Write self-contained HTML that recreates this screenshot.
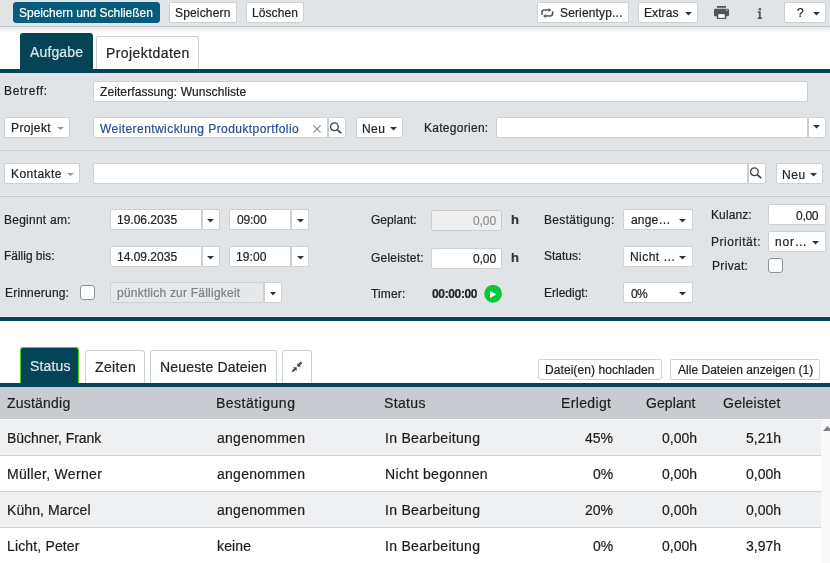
<!DOCTYPE html>
<html><head><meta charset="utf-8">
<style>
*{box-sizing:border-box;margin:0;padding:0}
html,body{width:830px;height:563px;overflow:hidden;background:#fff}
body{position:relative;font-family:"Liberation Sans",sans-serif;font-size:12px;color:#333}
.a{position:absolute}
.t{position:absolute;white-space:pre;will-change:transform;-webkit-text-stroke:0.2px currentColor}
.bx{position:absolute;background:#fff;border:1px solid #cdd1d4}
</style></head><body>
<div class="a" style="left:0px;top:0px;width:830px;height:26px;background:#e1e4e6;"></div>
<div class="a" style="left:0px;top:26px;width:830px;height:1px;background:#c5cacd;"></div>
<div class="a" style="left:0px;top:27px;width:830px;height:6px;background:#fff;background:linear-gradient(#e7e9ea,#fff)"></div>
<div class="bx" style="left:13px;top:2px;width:147px;height:21px;background:#075b7c;border-color:#075b7c;border-radius:3px"></div>
<div class="bx" style="left:169px;top:2px;width:68px;height:21px;background:#fff;border-color:#cdd1d4;border-radius:2px"></div>
<div class="bx" style="left:246px;top:2px;width:58px;height:21px;background:#fff;border-color:#cdd1d4;border-radius:2px"></div>
<div class="bx" style="left:537px;top:2px;width:92px;height:21px;background:#fff;border-color:#cdd1d4;border-radius:2px"></div>
<div class="bx" style="left:638px;top:2px;width:60px;height:21px;background:#fff;border-color:#cdd1d4;border-radius:2px"></div>
<div class="bx" style="left:784px;top:2px;width:42px;height:21px;background:#fff;border-color:#cdd1d4;border-radius:2px"></div>
<svg class="a" style="left:685px;top:12px" width="7" height="3.5" viewBox="0 0 7 3.5"><path d="M0 0H7L3.5 3.5Z" fill="#333"/></svg>
<svg class="a" style="left:813px;top:12px" width="7" height="3.5" viewBox="0 0 7 3.5"><path d="M0 0H7L3.5 3.5Z" fill="#333"/></svg>
<svg class="a" style="left:541px;top:8px" width="13" height="11" viewBox="0 0 13 11"><path d="M1 6.8V4.5Q1 2 3.5 2H8.2" fill="none" stroke="#555" stroke-width="1.6"/><path d="M7.6 0L10.4 2L7.6 4Z" fill="#555"/><path d="M11.6 3.2V5.6Q11.6 8 9 8H4.4" fill="none" stroke="#555" stroke-width="1.6"/><path d="M4.8 5.9L2 8L4.8 10.1Z" fill="#555"/></svg>
<svg class="a" style="left:714px;top:6px" width="15" height="13" viewBox="0 0 15 13"><rect x="3" y="0" width="9" height="1.8" fill="#555"/><rect x="0" y="2.7" width="15" height="7.6" rx="1.2" fill="#555"/><rect x="2.8" y="7" width="9.4" height="6" fill="#555"/><rect x="4.3" y="8.2" width="6.4" height="3.6" fill="#fff"/><rect x="12.3" y="3.6" width="1.2" height="1.2" fill="#ddd"/></svg>
<svg class="a" style="left:757px;top:8px" width="6" height="11" viewBox="0 0 6 11"><circle cx="2.9" cy="1.2" r="1.25" fill="#555"/><path d="M0.7 3.3H3.7V9.4H5V11H0.6V9.4H1.9V4.7H0.7Z" fill="#555"/></svg>
<div class="a" style="left:20px;top:33px;width:73px;height:36px;background:#054357;border-radius:3px 3px 0 0"></div>
<div class="bx" style="left:96px;top:36px;width:103px;height:33px;border-bottom:none;border-radius:3px 3px 0 0;border-color:#cad1d5"></div>
<div class="a" style="left:0px;top:69px;width:830px;height:4px;background:#054357;"></div>
<div class="a" style="left:0px;top:73px;width:830px;height:243px;background:#e1e4e6;"></div>
<div class="a" style="left:0px;top:316px;width:830px;height:1px;background:#eef0f1;"></div>
<div class="a" style="left:0px;top:317px;width:830px;height:4px;background:#054357;"></div>
<div class="bx" style="left:93px;top:81px;width:715px;height:21px;background:#fff;border-color:#cdd1d4;border-radius:2px"></div>
<div class="bx" style="left:4px;top:117px;width:66px;height:21px;background:#fff;border-color:#cdd1d4;border-radius:2px"></div>
<svg class="a" style="left:57px;top:127px" width="7" height="3" viewBox="0 0 7 3"><path d="M0 0H7L3.5 3Z" fill="#9a9a9a"/></svg>
<div class="bx" style="left:93px;top:117px;width:235px;height:21px;background:#fff;border-color:#cdd1d4;border-radius:2px 0 0 2px"></div>
<svg class="a" style="left:313px;top:125px" width="8" height="8" viewBox="0 0 8 8"><path d="M0.4 0.4L7.6 7.6M7.6 0.4L0.4 7.6" stroke="#8a8a8a" stroke-width="1.15"/></svg>
<div class="bx" style="left:328px;top:117px;width:18px;height:21px;background:#fff;border-color:#cdd1d4;border-radius:0 2px 2px 0"></div>
<svg class="a" style="left:329px;top:122px" width="14" height="13" viewBox="0 0 14 13"><circle cx="5.4" cy="4.8" r="3.85" fill="none" stroke="#3d4244" stroke-width="1.3"/><path d="M8.1 7.6L12.2 11.2" stroke="#3d4244" stroke-width="1.7"/></svg>
<div class="bx" style="left:356px;top:117px;width:47px;height:21px;background:#fff;border-color:#cdd1d4;border-radius:2px"></div>
<svg class="a" style="left:390px;top:127px" width="7" height="3.5" viewBox="0 0 7 3.5"><path d="M0 0H7L3.5 3.5Z" fill="#333"/></svg>
<div class="bx" style="left:496px;top:117px;width:312px;height:21px;background:#fff;border-color:#cdd1d4;border-radius:2px 0 0 2px"></div>
<div class="bx" style="left:808px;top:117px;width:18px;height:21px;background:#fff;border-color:#cdd1d4;border-radius:0 2px 2px 0"></div>
<svg class="a" style="left:813px;top:125px" width="7" height="3.5" viewBox="0 0 7 3.5"><path d="M0 0H7L3.5 3.5Z" fill="#333"/></svg>
<div class="a" style="left:0px;top:149px;width:830px;height:1px;background:#e5e8e9;"></div>
<div class="a" style="left:0px;top:150px;width:830px;height:1px;background:#c8cdd0;"></div>
<div class="bx" style="left:4px;top:163px;width:76px;height:21px;background:#fff;border-color:#cdd1d4;border-radius:2px"></div>
<svg class="a" style="left:67px;top:173px" width="7" height="3" viewBox="0 0 7 3"><path d="M0 0H7L3.5 3Z" fill="#9a9a9a"/></svg>
<div class="bx" style="left:93px;top:163px;width:655px;height:21px;background:#fff;border-color:#cdd1d4;border-radius:2px 0 0 2px"></div>
<div class="bx" style="left:748px;top:163px;width:18px;height:21px;background:#fff;border-color:#cdd1d4;border-radius:0 2px 2px 0"></div>
<svg class="a" style="left:749px;top:167px" width="14" height="13" viewBox="0 0 14 13"><circle cx="5.4" cy="4.8" r="3.85" fill="none" stroke="#3d4244" stroke-width="1.3"/><path d="M8.1 7.6L12.2 11.2" stroke="#3d4244" stroke-width="1.7"/></svg>
<div class="bx" style="left:776px;top:163px;width:47px;height:21px;background:#fff;border-color:#cdd1d4;border-radius:2px"></div>
<svg class="a" style="left:810px;top:173px" width="7" height="3.5" viewBox="0 0 7 3.5"><path d="M0 0H7L3.5 3.5Z" fill="#333"/></svg>
<div class="a" style="left:0px;top:195px;width:830px;height:1px;background:#e5e8e9;"></div>
<div class="a" style="left:0px;top:196px;width:830px;height:1px;background:#c8cdd0;"></div>
<div class="bx" style="left:110px;top:209px;width:92px;height:21px;background:#fff;border-color:#cdd1d4;border-radius:2px 0 0 2px"></div>
<div class="bx" style="left:202px;top:209px;width:18px;height:21px;background:#fff;border-color:#cdd1d4;border-radius:0 2px 2px 0"></div>
<svg class="a" style="left:207px;top:219px" width="7" height="3.5" viewBox="0 0 7 3.5"><path d="M0 0H7L3.5 3.5Z" fill="#333"/></svg>
<div class="bx" style="left:229px;top:209px;width:62px;height:21px;background:#fff;border-color:#cdd1d4;border-radius:2px 0 0 2px"></div>
<div class="bx" style="left:291px;top:209px;width:18px;height:21px;background:#fff;border-color:#cdd1d4;border-radius:0 2px 2px 0"></div>
<svg class="a" style="left:297px;top:219px" width="7" height="3.5" viewBox="0 0 7 3.5"><path d="M0 0H7L3.5 3.5Z" fill="#333"/></svg>
<div class="bx" style="left:110px;top:246px;width:92px;height:21px;background:#fff;border-color:#cdd1d4;border-radius:2px 0 0 2px"></div>
<div class="bx" style="left:202px;top:246px;width:18px;height:21px;background:#fff;border-color:#cdd1d4;border-radius:0 2px 2px 0"></div>
<svg class="a" style="left:207px;top:256px" width="7" height="3.5" viewBox="0 0 7 3.5"><path d="M0 0H7L3.5 3.5Z" fill="#333"/></svg>
<div class="bx" style="left:229px;top:246px;width:62px;height:21px;background:#fff;border-color:#cdd1d4;border-radius:2px 0 0 2px"></div>
<div class="bx" style="left:291px;top:246px;width:18px;height:21px;background:#fff;border-color:#cdd1d4;border-radius:0 2px 2px 0"></div>
<svg class="a" style="left:297px;top:256px" width="7" height="3.5" viewBox="0 0 7 3.5"><path d="M0 0H7L3.5 3.5Z" fill="#333"/></svg>
<div class="bx" style="left:80px;top:285px;width:15px;height:15px;background:#fff;border-color:#8a9599;border-radius:3px"></div>
<div class="bx" style="left:110px;top:282px;width:154px;height:21px;background:#e6e8e9;border-color:#cdd1d4;border-radius:2px"></div>
<div class="bx" style="left:264px;top:282px;width:18px;height:21px;background:#fff;border-color:#cdd1d4;border-radius:0 2px 2px 0"></div>
<svg class="a" style="left:270px;top:292px" width="6" height="3.5" viewBox="0 0 6 3.5"><path d="M0 0H6L3.0 3.5Z" fill="#333"/></svg>
<div class="bx" style="left:431px;top:210px;width:71px;height:21px;background:#efefef;border-color:#cacdcf;border-radius:2px"></div>
<div class="bx" style="left:431px;top:248px;width:71px;height:21px;background:#fff;border-color:#cdd1d4;border-radius:2px"></div>
<svg class="a" style="left:484px;top:285px" width="19" height="18" viewBox="0 0 19 18"><circle cx="9.1" cy="8.8" r="8.9" fill="#06c934"/><path d="M6 5.9L12.3 9.4L6 13Z" fill="#fff"/></svg>
<div class="bx" style="left:623px;top:209px;width:70px;height:21px;background:#fff;border-color:#cdd1d4;border-radius:2px"></div>
<svg class="a" style="left:679px;top:219px" width="7" height="3.5" viewBox="0 0 7 3.5"><path d="M0 0H7L3.5 3.5Z" fill="#333"/></svg>
<div class="bx" style="left:623px;top:246px;width:70px;height:21px;background:#fff;border-color:#cdd1d4;border-radius:2px"></div>
<svg class="a" style="left:679px;top:256px" width="7" height="3.5" viewBox="0 0 7 3.5"><path d="M0 0H7L3.5 3.5Z" fill="#333"/></svg>
<div class="bx" style="left:623px;top:282px;width:70px;height:21px;background:#fff;border-color:#cdd1d4;border-radius:2px"></div>
<svg class="a" style="left:679px;top:292px" width="7" height="3.5" viewBox="0 0 7 3.5"><path d="M0 0H7L3.5 3.5Z" fill="#333"/></svg>
<div class="bx" style="left:768px;top:204px;width:58px;height:21px;background:#fff;border-color:#cdd1d4;border-radius:2px"></div>
<div class="bx" style="left:768px;top:231px;width:58px;height:21px;background:#fff;border-color:#cdd1d4;border-radius:2px"></div>
<svg class="a" style="left:812px;top:241px" width="7" height="3.5" viewBox="0 0 7 3.5"><path d="M0 0H7L3.5 3.5Z" fill="#333"/></svg>
<div class="bx" style="left:768px;top:258px;width:15px;height:15px;background:#fff;border-color:#8a9599;border-radius:3px"></div>
<div class="a" style="left:20px;top:347px;width:59px;height:36px;background:#054357;border:1px solid #45d31c;border-bottom:none;border-radius:3px 3px 0 0"></div>
<div class="bx" style="left:85px;top:350px;width:60px;height:33px;border-bottom:none;border-radius:3px 3px 0 0;border-color:#cad1d5"></div>
<div class="bx" style="left:150px;top:350px;width:127px;height:33px;border-bottom:none;border-radius:3px 3px 0 0;border-color:#cad1d5"></div>
<div class="bx" style="left:282px;top:350px;width:30px;height:33px;border-bottom:none;border-radius:3px 3px 0 0;border-color:#cad1d5"></div>
<svg class="a" style="left:288px;top:358px" width="18" height="18" viewBox="0 0 18 18"><path d="M9.3 5L9.3 8.7L13 8.7Z" fill="#444"/><path d="M10.6 7.3L13.6 4.3" stroke="#444" stroke-width="2"/><path d="M4.9 9.3L8.7 9.3L8.7 13Z" fill="#444"/><path d="M7.4 10.6L4.3 13.6" stroke="#444" stroke-width="2"/></svg>
<div class="bx" style="left:538px;top:359px;width:124px;height:21px;background:#fff;border-color:#cdd1d4;border-radius:2px"></div>
<div class="bx" style="left:670px;top:359px;width:150px;height:21px;background:#fff;border-color:#cdd1d4;border-radius:2px"></div>
<div class="a" style="left:0px;top:383px;width:830px;height:4px;background:#054357;"></div>
<div class="a" style="left:0px;top:387px;width:830px;height:32px;background:#c8ccd0;"></div>
<div class="a" style="left:0px;top:419px;width:821px;height:1px;background:#fbfbfc;"></div>
<div class="a" style="left:0px;top:420px;width:821px;height:35px;background:#eff0f2;"></div>
<div class="a" style="left:0px;top:455px;width:821px;height:1px;background:#cfd3d6;"></div>
<div class="a" style="left:0px;top:491px;width:821px;height:1px;background:#cfd3d6;"></div>
<div class="a" style="left:0px;top:492px;width:821px;height:35px;background:#eff0f2;"></div>
<div class="a" style="left:0px;top:527px;width:821px;height:1px;background:#cfd3d6;"></div>
<div class="a" style="left:821px;top:419px;width:9px;height:144px;background:#fafafa;"></div>
<svg class="a" style="left:822px;top:425px" width="8" height="7" viewBox="0 0 8 7"><path d="M0.9 5.9H10L5.4 1Z" fill="#7d7d7d"/></svg>
<div class="t" style="left:19.0px;top:6px;font-size:12px;line-height:14px;color:#fff;letter-spacing:-0.01px">Speichern und Schließen</div>
<div class="t" style="left:175.0px;top:6px;font-size:12px;line-height:14px;color:#222222;letter-spacing:0.16px">Speichern</div>
<div class="t" style="left:251.5px;top:6px;font-size:12px;line-height:14px;color:#222222;letter-spacing:0.08px">Löschen</div>
<div class="t" style="left:559.5px;top:6px;font-size:12px;line-height:14px;color:#222222;letter-spacing:0.15px">Serientyp...</div>
<div class="t" style="left:644.0px;top:6px;font-size:12px;line-height:14px;color:#222222;letter-spacing:0.08px">Extras</div>
<div class="t" style="left:796.5px;top:6px;font-size:12px;line-height:14px;color:#222222">?</div>
<div class="t" style="left:30.0px;top:44px;font-size:14px;line-height:16px;color:#dfe8eb;letter-spacing:0.13px">Aufgabe</div>
<div class="t" style="left:105.5px;top:45px;font-size:14px;line-height:16px;color:#222222;letter-spacing:0.43px">Projektdaten</div>
<div class="t" style="left:4.0px;top:84px;font-size:12px;line-height:14px;color:#222222;letter-spacing:0.66px">Betreff:</div>
<div class="t" style="left:99.5px;top:85px;font-size:12px;line-height:14px;color:#222222;letter-spacing:0.09px">Zeiterfassung: Wunschliste</div>
<div class="t" style="left:10.5px;top:121px;font-size:12px;line-height:14px;color:#222222;letter-spacing:0.38px">Projekt</div>
<div class="t" style="left:100.0px;top:122px;font-size:12px;line-height:14px;color:#2d4b93;letter-spacing:0.43px">Weiterentwicklung Produktportfolio</div>
<div class="t" style="left:361.5px;top:122px;font-size:12px;line-height:14px;color:#222222;letter-spacing:0.45px">Neu</div>
<div class="t" style="left:423.5px;top:121px;font-size:12px;line-height:14px;color:#222222;letter-spacing:0.28px">Kategorien:</div>
<div class="t" style="left:10.5px;top:167px;font-size:12px;line-height:14px;color:#222222;letter-spacing:0.44px">Kontakte</div>
<div class="t" style="left:781.5px;top:168px;font-size:12px;line-height:14px;color:#222222;letter-spacing:0.55px">Neu</div>
<div class="t" style="left:3.5px;top:213px;font-size:12px;line-height:14px;color:#222222;letter-spacing:0.25px">Beginnt am:</div>
<div class="t" style="left:116.5px;top:213px;font-size:12px;line-height:14px;color:#222222">19.06.2035</div>
<div class="t" style="left:236.5px;top:213px;font-size:12px;line-height:14px;color:#222222;letter-spacing:-0.12px">09:00</div>
<div class="t" style="left:3.5px;top:249px;font-size:12px;line-height:14px;color:#222222;letter-spacing:-0.02px">Fällig bis:</div>
<div class="t" style="left:116.5px;top:250px;font-size:12px;line-height:14px;color:#222222">14.09.2035</div>
<div class="t" style="left:235.5px;top:250px;font-size:12px;line-height:14px;color:#222222;letter-spacing:0.12px">19:00</div>
<div class="t" style="left:4.5px;top:286px;font-size:12px;line-height:14px;color:#222222;letter-spacing:0.19px">Erinnerung:</div>
<div class="t" style="left:116.5px;top:286px;font-size:12px;line-height:14px;color:#7b8084;letter-spacing:0.22px">pünktlich zur Fälligkeit</div>
<div class="t" style="left:370.5px;top:213px;font-size:12px;line-height:14px;color:#222222;letter-spacing:0.04px">Geplant:</div>
<div class="t" style="left:472.5px;top:214px;font-size:12px;line-height:14px;color:#8d8f91;letter-spacing:-0.1px">0,00</div>
<div class="t" style="left:511px;top:212.5px;font-size:13px;line-height:14px;color:#333;font-weight:700">h</div>
<div class="t" style="left:370.5px;top:251px;font-size:12px;line-height:14px;color:#222222;letter-spacing:0.21px">Geleistet:</div>
<div class="t" style="left:472.5px;top:252px;font-size:12px;line-height:14px;color:#222222;letter-spacing:-0.1px">0,00</div>
<div class="t" style="left:511px;top:250.5px;font-size:13px;line-height:14px;color:#333;font-weight:700">h</div>
<div class="t" style="left:370.5px;top:287px;font-size:12px;line-height:14px;color:#222222;letter-spacing:0.16px">Timer:</div>
<div class="t" style="left:431.5px;top:287px;font-size:12px;line-height:14px;color:#222222;font-weight:700;letter-spacing:-0.36px">00:00:00</div>
<div class="t" style="left:544.0px;top:213px;font-size:12px;line-height:14px;color:#222222;letter-spacing:0.32px">Bestätigung:</div>
<div class="t" style="left:630.5px;top:213px;font-size:12px;line-height:14px;color:#222222;letter-spacing:0.18px">ange…</div>
<div class="t" style="left:544.0px;top:249px;font-size:12px;line-height:14px;color:#222222">Status:</div>
<div class="t" style="left:629.5px;top:250px;font-size:12px;line-height:14px;color:#222222;letter-spacing:0.45px">Nicht …</div>
<div class="t" style="left:544.0px;top:286px;font-size:12px;line-height:14px;color:#222222">Erledigt:</div>
<div class="t" style="left:630.5px;top:287px;font-size:12px;line-height:14px;color:#222222;letter-spacing:-0.6px">0%</div>
<div class="t" style="left:710.5px;top:208px;font-size:12px;line-height:14px;color:#222222;letter-spacing:0.1px">Kulanz:</div>
<div class="t" style="left:796.0px;top:209px;font-size:12px;line-height:14px;color:#222222;letter-spacing:-0.27px">0,00</div>
<div class="t" style="left:710.5px;top:235px;font-size:12px;line-height:14px;color:#222222;letter-spacing:0.54px">Priorität:</div>
<div class="t" style="left:775.0px;top:235px;font-size:12px;line-height:14px;color:#222222;letter-spacing:0.8px">nor…</div>
<div class="t" style="left:711.5px;top:259px;font-size:12px;line-height:14px;color:#222222;letter-spacing:0.32px">Privat:</div>
<div class="t" style="left:29.5px;top:358px;font-size:14px;line-height:16px;color:#dfe8eb;letter-spacing:0.14px">Status</div>
<div class="t" style="left:94.5px;top:359px;font-size:14px;line-height:16px;color:#222222;letter-spacing:0.36px">Zeiten</div>
<div class="t" style="left:160.0px;top:359px;font-size:14px;line-height:16px;color:#222222;letter-spacing:0.17px">Neueste Dateien</div>
<div class="t" style="left:545.0px;top:363px;font-size:12px;line-height:14px;color:#222222;letter-spacing:0.07px">Datei(en) hochladen</div>
<div class="t" style="left:677.5px;top:363px;font-size:12px;line-height:14px;color:#222222;letter-spacing:0.02px">Alle Dateien anzeigen (1)</div>
<div class="t" style="left:7.0px;top:395px;font-size:14px;line-height:16px;color:#1c1c1c;letter-spacing:0.21px">Zuständig</div>
<div class="t" style="left:216.0px;top:395px;font-size:14px;line-height:16px;color:#1c1c1c;letter-spacing:0.5px">Bestätigung</div>
<div class="t" style="left:384.0px;top:395px;font-size:14px;line-height:16px;color:#1c1c1c;letter-spacing:0.36px">Status</div>
<div class="t" style="left:561.0px;top:395px;font-size:14px;line-height:16px;color:#1c1c1c;letter-spacing:0.36px">Erledigt</div>
<div class="t" style="left:646.0px;top:395px;font-size:14px;line-height:16px;color:#1c1c1c;letter-spacing:0.08px">Geplant</div>
<div class="t" style="left:722.5px;top:395px;font-size:14px;line-height:16px;color:#1c1c1c;letter-spacing:0.26px">Geleistet</div>
<div class="t" style="left:7.0px;top:430px;font-size:14px;line-height:16px;color:#1c1c1c;letter-spacing:-0.05px">Büchner, Frank</div>
<div class="t" style="left:217.0px;top:430px;font-size:14px;line-height:16px;color:#1c1c1c;letter-spacing:0.26px">angenommen</div>
<div class="t" style="left:384.5px;top:430px;font-size:14px;line-height:16px;color:#1c1c1c;letter-spacing:0.3px">In Bearbeitung</div>
<div class="t" style="left:584.5px;top:430px;font-size:14px;line-height:16px;color:#1c1c1c">45%</div>
<div class="t" style="left:662.0px;top:430px;font-size:14px;line-height:16px;color:#1c1c1c">0,00h</div>
<div class="t" style="left:746.0px;top:430px;font-size:14px;line-height:16px;color:#1c1c1c">5,21h</div>
<div class="t" style="left:7.0px;top:466px;font-size:14px;line-height:16px;color:#1c1c1c;letter-spacing:0.31px">Müller, Werner</div>
<div class="t" style="left:217.0px;top:466px;font-size:14px;line-height:16px;color:#1c1c1c;letter-spacing:0.26px">angenommen</div>
<div class="t" style="left:384.5px;top:466px;font-size:14px;line-height:16px;color:#1c1c1c;letter-spacing:0.35px">Nicht begonnen</div>
<div class="t" style="left:592.5px;top:466px;font-size:14px;line-height:16px;color:#1c1c1c">0%</div>
<div class="t" style="left:662.0px;top:466px;font-size:14px;line-height:16px;color:#1c1c1c">0,00h</div>
<div class="t" style="left:746.0px;top:466px;font-size:14px;line-height:16px;color:#1c1c1c">0,00h</div>
<div class="t" style="left:7.0px;top:502px;font-size:14px;line-height:16px;color:#1c1c1c;letter-spacing:0.1px">Kühn, Marcel</div>
<div class="t" style="left:217.0px;top:502px;font-size:14px;line-height:16px;color:#1c1c1c;letter-spacing:0.26px">angenommen</div>
<div class="t" style="left:384.5px;top:502px;font-size:14px;line-height:16px;color:#1c1c1c;letter-spacing:0.3px">In Bearbeitung</div>
<div class="t" style="left:584.5px;top:502px;font-size:14px;line-height:16px;color:#1c1c1c">20%</div>
<div class="t" style="left:662.0px;top:502px;font-size:14px;line-height:16px;color:#1c1c1c">0,00h</div>
<div class="t" style="left:746.0px;top:502px;font-size:14px;line-height:16px;color:#1c1c1c">0,00h</div>
<div class="t" style="left:7.0px;top:538px;font-size:14px;line-height:16px;color:#1c1c1c;letter-spacing:0.15px">Licht, Peter</div>
<div class="t" style="left:216.5px;top:538px;font-size:14px;line-height:16px;color:#1c1c1c;letter-spacing:0.15px">keine</div>
<div class="t" style="left:384.5px;top:538px;font-size:14px;line-height:16px;color:#1c1c1c;letter-spacing:0.3px">In Bearbeitung</div>
<div class="t" style="left:592.5px;top:538px;font-size:14px;line-height:16px;color:#1c1c1c">0%</div>
<div class="t" style="left:662.0px;top:538px;font-size:14px;line-height:16px;color:#1c1c1c">0,00h</div>
<div class="t" style="left:746.0px;top:538px;font-size:14px;line-height:16px;color:#1c1c1c">3,97h</div>
</body></html>
